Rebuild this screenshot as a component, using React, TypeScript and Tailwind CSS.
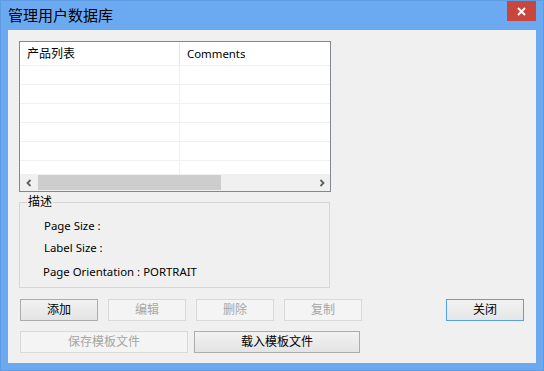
import React from "react";

const FONT = "font-['Noto_Sans','Noto_Sans_CJK_SC',sans-serif]";

// ─── Small drawings ───────────────────────────────────────────────────────────

function Chevron({ dir }: { dir: "left" | "right" }): React.ReactElement {
  return (
    <svg width="8" height="8" viewBox="0 0 8 8">
      <path
        d={dir === "left" ? "M5.5 1 L2.5 4 L5.5 7" : "M2.5 1 L5.5 4 L2.5 7"}
        fill="none"
        stroke="#606060"
        strokeWidth="1.8"
      />
    </svg>
  );
}

// ─── Buttons ──────────────────────────────────────────────────────────────────

type BtnKind = "normal" | "disabled" | "default";

function WinButton({ label, kind, w }: { label: string; kind: BtnKind; w: string }): React.ReactElement {
  const cls =
    kind === "disabled"
      ? "border-[#d9d9d9] bg-[#f4f4f4] text-[#a6a6a6]"
      : kind === "default"
      ? "border-[#5b9fe3] bg-gradient-to-b from-[#f2f2f2] to-[#e6e6e6] text-black"
      : "border-[#acacac] bg-gradient-to-b from-[#f2f2f2] to-[#e4e4e4] text-black";
  return (
    <div className={`${w} h-[22px] border ${cls} flex items-center justify-center text-[12px] leading-none`}>
      {label}
    </div>
  );
}

// ─── List view ────────────────────────────────────────────────────────────────

function ListView(): React.ReactElement {
  const rows = [0, 1, 2, 3, 4, 5];
  return (
    <div className="w-[312px] h-[151px] border border-[#828790] bg-white flex flex-col">
      {/* Header */}
      <div className="h-[24px] shrink-0 flex border-b border-[#f0f0f0] text-[12px] text-black">
        <div className="w-[160px] border-r border-[#e5e5e5] pl-[7px] pt-[1px] flex items-center">产品列表</div>
        <div className="flex-1 pl-[7px] pt-[1px] flex items-center text-[11.4px]">Comments</div>
      </div>

      {/* Rows */}
      <div className="flex-1 overflow-hidden flex flex-col">
        {rows.map((r) => (
          <div key={r} className="h-[19px] shrink-0 flex border-b border-[#f0f0f0]">
            <div className="w-[160px] border-r border-[#f0f0f0]" />
            <div className="flex-1" />
          </div>
        ))}
      </div>

      {/* Horizontal scrollbar */}
      <div className="h-[17px] shrink-0 bg-[#f0f0f0] flex items-center">
        <div className="w-[17px] h-full flex items-center justify-center">
          <Chevron dir="left" />
        </div>
        <div className="flex-1 h-full flex items-center">
          <div className="w-[183px] h-[15px] bg-[#cdcdcd] ml-[1px]" />
        </div>
        <div className="w-[17px] h-full flex items-center justify-center">
          <Chevron dir="right" />
        </div>
      </div>
    </div>
  );
}

// ─── Main dialog ──────────────────────────────────────────────────────────────

export default function App(): React.ReactElement {
  return (
    <div className={`${FONT} w-[544px] h-[371px] bg-[#6ba9f1] flex flex-col border border-[#5f9be2] overflow-hidden`}>
      {/* Title bar */}
      <div className="h-[29px] shrink-0 flex items-start">
        <div className="pl-[7px] pt-[5px] text-[15px] leading-[18px] text-black">管理用户数据库</div>
        <div className="ml-auto mr-[7px] w-[29px] h-[20px] bg-[#c7473f] flex items-center justify-center">
          <svg width="9" height="9" viewBox="0 0 9 9">
            <path d="M1 1 L8 8 M8 1 L1 8" stroke="white" strokeWidth="2" />
          </svg>
        </div>
      </div>

      {/* Client area */}
      <div className="mx-[7px] h-[333px] shrink-0 bg-[#f0f0f0] flex flex-col pl-[11px] pt-[11px]">
        <ListView />

        {/* Description group */}
        <fieldset className="mt-[2px] w-[311px] h-[94px] border border-[#d7d7d7] p-0 m-0 min-w-0">
          <legend className="ml-[7px] px-[1px] text-[12px] leading-[16px] text-black">描述</legend>
          <div className="pl-[24px] pt-[8px] flex flex-col text-[11.4px] leading-[16px] text-black">
            <div>Page Size :</div>
            <div className="mt-[6px]">Label Size :</div>
            <div className="mt-[8px] -ml-[1px]">Page Orientation : PORTRAIT</div>
          </div>
        </fieldset>

        {/* Button row 1 */}
        <div className="mt-[11px] flex items-center pl-[1px] pr-[12px]">
          <div className="flex gap-[10px]">
            <WinButton label="添加" kind="normal" w="w-[78px]" />
            <WinButton label="编辑" kind="disabled" w="w-[78px]" />
            <WinButton label="删除" kind="disabled" w="w-[78px]" />
            <WinButton label="复制" kind="disabled" w="w-[78px]" />
          </div>
          <div className="ml-auto">
            <WinButton label="关闭" kind="default" w="w-[78px]" />
          </div>
        </div>

        {/* Button row 2 */}
        <div className="mt-[10px] flex gap-[6px] pl-[1px]">
          <WinButton label="保存模板文件" kind="disabled" w="w-[168px]" />
          <WinButton label="载入模板文件" kind="normal" w="w-[166px]" />
        </div>
      </div>
    </div>
  );
}
